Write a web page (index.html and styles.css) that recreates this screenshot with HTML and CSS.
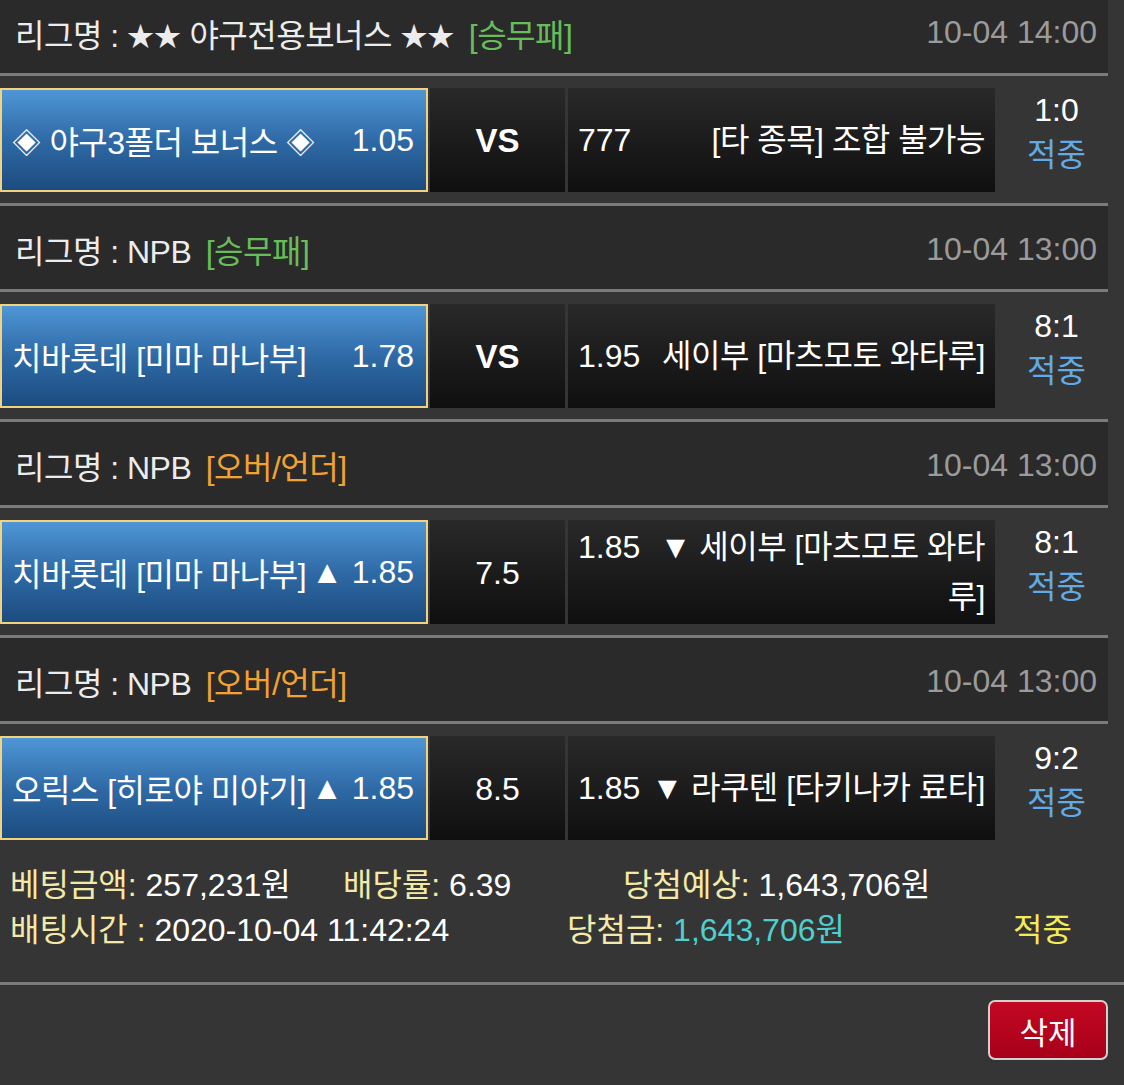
FILE: index.html
```html
<!DOCTYPE html>
<html lang="ko">
<head>
<meta charset="utf-8">
<title>배팅내역</title>
<link rel="stylesheet" href="styles.css">
</head>
<body>
<div class="page">
  <div class="list">
    <div class="league league-first">
      <div class="league-name">리그명 : <span class="sym">★★</span> 야구전용보너스 <span class="sym">★★</span> <span class="type type-win">[승무패]</span></div>
      <div class="league-date">10-04 14:00</div>
    </div>
    <div class="game">
      <div class="pick home">
        <span class="team"><span class="sym dia">◈</span> 야구3폴더 보너스 <span class="sym dia">◈</span></span>
        <span class="odds">1.05</span>
      </div>
      <div class="pick mid vs">VS</div>
      <div class="pick away">
        <div class="away-text"><span class="away-odds">777</span>[타 종목] 조합 불가능</div>
      </div>
      <div class="result"><div>1:0</div><div class="hit">적중</div></div>
    </div>

    <div class="league">
      <div class="league-name">리그명 : NPB <span class="type type-win">[승무패]</span></div>
      <div class="league-date">10-04 13:00</div>
    </div>
    <div class="game">
      <div class="pick home">
        <span class="team">치바롯데 [미마 마나부]</span>
        <span class="odds">1.78</span>
      </div>
      <div class="pick mid vs">VS</div>
      <div class="pick away">
        <div class="away-text"><span class="away-odds">1.95</span>세이부 [마츠모토 와타루]</div>
      </div>
      <div class="result"><div>8:1</div><div class="hit">적중</div></div>
    </div>

    <div class="league">
      <div class="league-name">리그명 : NPB <span class="type type-ou">[오버/언더]</span></div>
      <div class="league-date">10-04 13:00</div>
    </div>
    <div class="game">
      <div class="pick home">
        <span class="team">치바롯데 [미마 마나부]</span>
        <span class="odds">▲ 1.85</span>
      </div>
      <div class="pick mid">7.5</div>
      <div class="pick away">
        <div class="away-text"><span class="away-odds">1.85</span>▼ 세이부 [마츠모토 와타루]</div>
      </div>
      <div class="result"><div>8:1</div><div class="hit">적중</div></div>
    </div>

    <div class="league">
      <div class="league-name">리그명 : NPB <span class="type type-ou">[오버/언더]</span></div>
      <div class="league-date">10-04 13:00</div>
    </div>
    <div class="game game-last">
      <div class="pick home">
        <span class="team">오릭스 [히로야 미야기]</span>
        <span class="odds">▲ 1.85</span>
      </div>
      <div class="pick mid">8.5</div>
      <div class="pick away">
        <div class="away-text"><span class="away-odds">1.85</span>▼ 라쿠텐 [타키나카 료타]</div>
      </div>
      <div class="result"><div>9:2</div><div class="hit">적중</div></div>
    </div>
  </div>

  <div class="summary">
    <div class="sum-row">
      <span class="s1"><span class="lbl">베팅금액:</span> 257,231원</span>
      <span class="s2"><span class="lbl">배당률:</span> 6.39</span>
      <span class="s3"><span class="lbl">당첨예상:</span> 1,643,706원</span>
    </div>
    <div class="sum-row">
      <span class="t1"><span class="lbl">배팅시간 :</span> 2020-10-04 11:42:24</span>
      <span class="t2"><span class="lbl">당첨금:</span> <span class="win">1,643,706원</span></span>
      <span class="t3 status">적중</span>
    </div>
  </div>

  <div class="actions">
    <button class="btn-delete" type="button">삭제</button>
  </div>
</div>
</body>
</html>
```

FILE: styles.css
```css
html, body {
  margin: 0;
  padding: 0;
  background: #353535;
}

body {
  font-family: "Liberation Sans", "Noto Sans CJK KR", sans-serif;
  font-size: 32px;
  color: #ffffff;
}

.page {
  width: 1124px;
  min-height: 1085px;
}

.list {
  width: 1108px;
}

.league {
  display: flex;
  justify-content: space-between;
  align-items: center;
  box-sizing: border-box;
  height: 86px;
  padding: 3px 11px 0 15px;
  background: #2a2a2a;
  border-bottom: 3px solid #7b7b7b;
  color: #ececec;
  white-space: nowrap;
}

.league-first {
  height: 76px;
  padding-top: 0;
  padding-bottom: 8px;
}

.league-name {
  letter-spacing: -0.5px;
}

.sym {
  font-size: 27px;
  letter-spacing: 0;
  vertical-align: 1px;
}

.dia {
  font-size: 29px;
}

.type {
  margin-left: 6px;
}

.type-win {
  color: #67bd59;
}

.type-ou {
  color: #f2a234;
}

.league-date {
  color: #9b9b9b;
}

.game {
  display: flex;
  box-sizing: border-box;
  height: 130px;
  padding: 12px 0 11px;
  border-bottom: 3px solid #7b7b7b;
}

.game-last {
  border-bottom: none;
  height: 127px;
}

.pick {
  box-sizing: border-box;
  height: 104px;
  display: flex;
  align-items: center;
}

.home {
  width: 428px;
  justify-content: space-between;
  padding: 0 12px 0 10px;
  border: 2px solid #f2d27f;
  background: linear-gradient(to bottom, #4f96d6 0%, #2f6aa6 50%, #1c4c7f 100%);
  white-space: nowrap;
}

.team {
  letter-spacing: -0.5px;
}

.mid {
  width: 135px;
  margin-left: 2px;
  justify-content: center;
  padding-top: 2px;
  background: linear-gradient(to bottom, #292929 0%, #0f0f0f 100%);
}

.vs {
  font-weight: bold;
  font-size: 33px;
}

.away {
  width: 427px;
  margin-left: 3px;
  padding: 0 10px;
  background: linear-gradient(to bottom, #292929 0%, #0f0f0f 100%);
}

.away-text {
  width: 100%;
  text-align: right;
  line-height: 50px;
  letter-spacing: -0.5px;
}

.away-odds {
  float: left;
  letter-spacing: 0;
}

.result {
  width: 113px;
  box-sizing: border-box;
  padding-left: 10px;
  text-align: center;
  line-height: 45px;
}

.hit {
  color: #62aae6;
}

.summary {
  padding: 12px 0 29px 10px;
  border-bottom: 3px solid #7b7b7b;
}

.sum-row {
  display: flex;
  line-height: 45px;
  white-space: nowrap;
}

.lbl {
  color: #f3e9a9;
}

.s1 { width: 333px; }
.s2 { width: 280px; }
.t1 { width: 557px; }
.t2 { width: 446px; }

.win {
  color: #4fcfcd;
}

.status {
  color: #f3ea5c;
}

.actions {
  display: flex;
  justify-content: flex-end;
  padding: 15px 16px 0 0;
}

.btn-delete {
  width: 120px;
  height: 60px;
  font-family: inherit;
  font-size: 31px;
  color: #ffffff;
  background: linear-gradient(to bottom, #c30822 0%, #a8001a 100%);
  border: 2px solid #d4d0d0;
  border-radius: 7px;
  padding: 0;
}
```
